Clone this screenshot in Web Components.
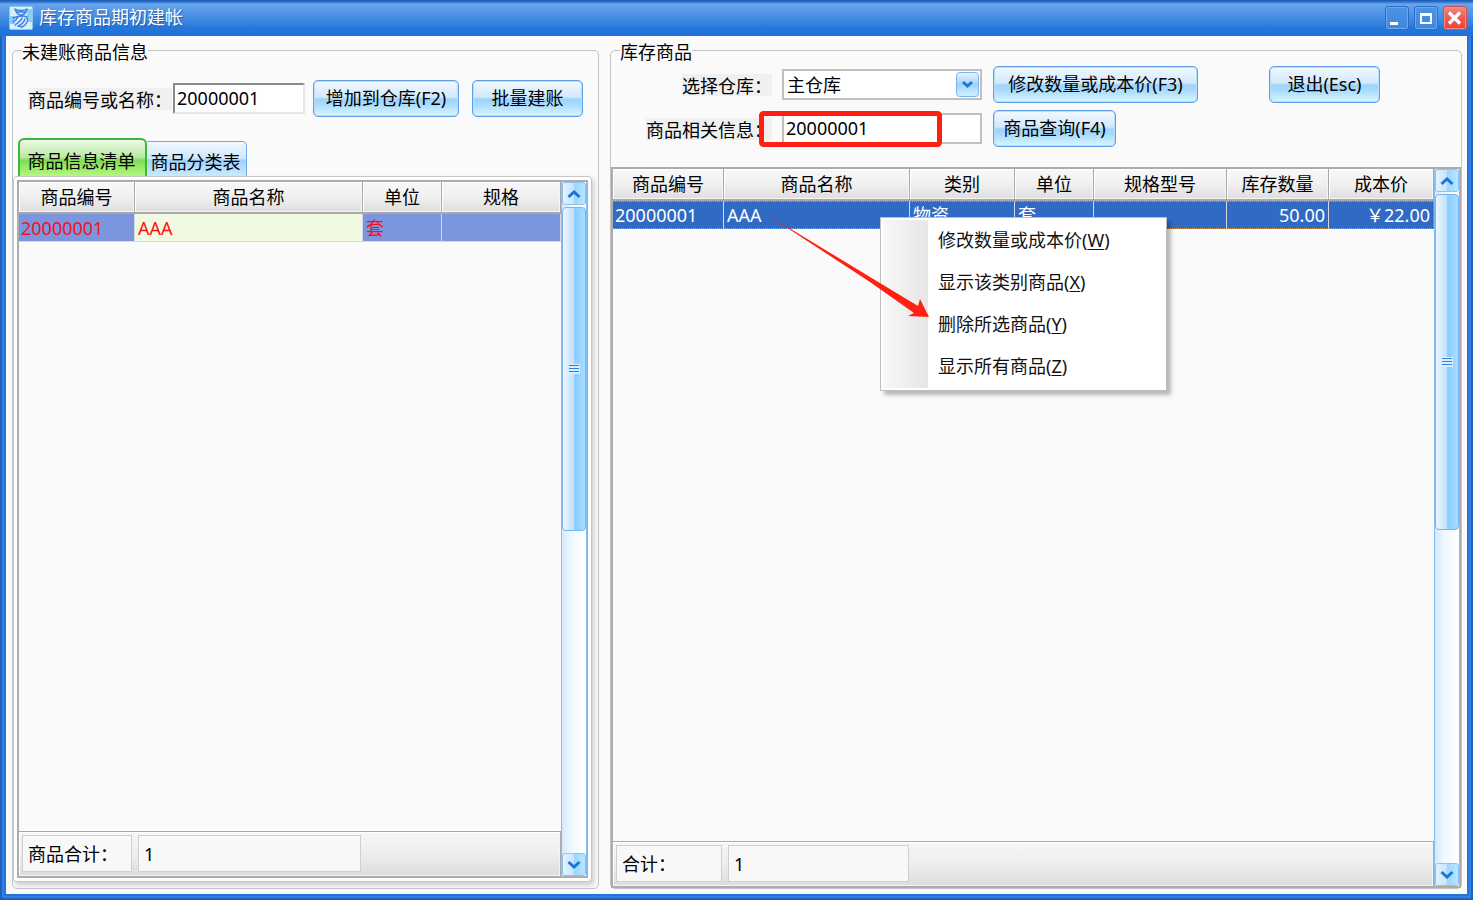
<!DOCTYPE html>
<html lang="zh-CN">
<head>
<meta charset="utf-8">
<title>库存商品期初建帐</title>
<style>
  html, body { height: 100%; margin: 0; }
  body {
    font: 18px/22px "Noto Sans", "Noto Sans CJK SC", sans-serif;
    color: #000;
  }
  .panels { flex: 1; min-height: 0; display: grid; grid-template-columns: 587fr 852fr; gap: 11px; padding: 1px 5px 5px 6px; }
  .bar { display: flex; align-items: center; }
  .left-bar { padding: 17px 0 21px 15px; gap: 8px; }
  .left-bar tool-button + tool-button { margin-left: 5px; }
  .right-bar { display: grid; grid-template-columns: 371px auto 1fr; gap: 7px 11px; align-items: center; justify-items: start; padding: 3px 0 20px; }
  .right-bar text-field, .right-bar select-field { justify-self: end; }
  .right-bar .exit { margin-left: 60px; }
</style>
</head>
<body>
<app-window heading="库存商品期初建帐">
  <div class="panels">
    <group-box legend="未建账商品信息">
      <div class="bar left-bar">
        <text-field label="商品编号或名称：" value="20000001" look="sunken"></text-field>
        <tool-button size="m">增加到仓库(F2)</tool-button>
        <tool-button size="s">批量建账</tool-button>
      </div>
      <tab-panel tabs="商品信息清单,商品分类表">
        <data-grid look="red"
          columns="商品编号:116,商品名称:,单位:79,规格:119"
          row="20000001,AAA,套,"
          total="商品合计：:110,1:223"></data-grid>
      </tab-panel>
    </group-box>
    <group-box legend="库存商品">
      <div class="right-bar">
        <select-field label="选择仓库：" value="主仓库"></select-field>
        <tool-button size="l">修改数量或成本价(F3)</tool-button>
        <tool-button size="s" class="exit">退出(Esc)</tool-button>
        <text-field label="商品相关信息：" value="20000001"></text-field>
        <tool-button size="f">商品查询(F4)</tool-button>
      </div>
      <data-grid look="blue"
        columns="商品编号:111,商品名称:,类别:105,单位:79,规格型号:133,库存数量:102:n,成本价:105:n"
        row="20000001,AAA,物资,套,,50.00,￥22.00"
        total="合计：:106,1:181"></data-grid>
    </group-box>
  </div>
  <context-menu slot="overlay" items="修改数量或成本价:W,显示该类别商品:X,删除所选商品:Y,显示所有商品:Z"></context-menu>
  <red-callout slot="overlay"></red-callout>
</app-window>

<script>
const define = (name, render) => customElements.define(name, class extends HTMLElement {
  connectedCallback() {
    if (this.shadowRoot) return;
    const t = document.createElement('template');
    t.innerHTML = render(this);
    this.attachShadow({ mode: 'open' }).append(t.content.cloneNode(true));
  }
});
const list = (el, name) => el.getAttribute(name).split(',');

define('app-window', el => `
<style>
  :host { display: flex; flex-direction: column; position: relative; box-sizing: border-box; min-height: 100vh;
    padding: 0 6px 6px; background: #2373d9; box-shadow: inset 0 0 0 2px #1d62bc, inset 0 0 0 4px #2f80e2; }
  header { display: flex; align-items: center; height: 36px; margin: 0 -6px; padding: 0 6px 0 9px; box-sizing: border-box; gap: 6px;
    background: linear-gradient(#1c62ba 0 1px, #4b8be0 3px, #68a5ee 4px, #5b9be9 9px, #3a86e0 22px, #2376dc 28px, #2072d9); }
  h1 { flex: 1; margin: 0; font: inherit; line-height: 20px; padding-bottom: 2px; color: #fff; text-shadow: 1px 1px 1px #1f59a8; }
  .sys { display: flex; gap: 5px; }
  button { width: 24px; height: 24px; padding: 0; border: 1px solid #2b6cc4; border-radius: 3px;
    background: linear-gradient(#4b93e6, #3f87de); box-shadow: inset 0 0 0 1px #6aa9ee; }
  .close { border-color: #c8524f; background: linear-gradient(#ee8a84, #ee5a52 50%, #f43f38); box-shadow: inset 0 0 0 1px #f58a84; }
  button svg { display: block; }
  main { flex: 1; display: flex; flex-direction: column; background: #fafafa; }
</style>
<header>
  <svg width="24" height="24" viewBox="0 0 24 24" aria-hidden="true">
    <rect width="24" height="24" rx="2" fill="#8fc6f0"/><rect x="1" y="1" width="22" height="22" fill="#d6edfc"/>
    <path d="M1 10h5v8H1zM18 3h5v13h-5z" fill="#86d2f5"/>
    <g fill="none" stroke="#3f83dc" stroke-width="1.500" stroke-linecap="round" stroke-linejoin="round">
      <path d="M6 3c3 2 9 2 12 0-1 4-3 6-6 6S7 6 6 3zM8 6h8M4 12c5-2 10-3 14-1 2 4-1 8-5 10l-4-1M9 11c-1 2-3 4-5 5M13 12c-1 3-4 5-7 7M16 13c-1 3-4 6-7 7"/>
    </g>
  </svg>
  <h1>${el.getAttribute('heading')}</h1>
  <div class="sys">
    <button aria-label="最小化"><svg width="22" height="22"><path d="M4 15h8v3H4z" fill="#fff"/></svg></button>
    <button aria-label="最大化"><svg width="22" height="22"><path d="M5 6h12v11H5zM7 9v6h8V9z" fill="#fff" fill-rule="evenodd"/></svg></button>
    <button class="close" aria-label="关闭"><svg width="22" height="22"><path d="M5 5.500l11 11M16 5.500l-11 11" stroke="#fff" stroke-width="3.400"/></svg></button>
  </div>
</header>
<main><slot></slot></main>
<slot name="overlay"></slot>`);

define('group-box', el => `
<style>
  :host { display: flex; min-width: 0; }
  fieldset { flex: 1; min-width: 0; display: flex; flex-direction: column; margin: 0; padding: 0; border: 1px solid #c3c3c3; border-radius: 5px; }
  legend { margin-left: 9px; padding: 4px 0 0; line-height: 22px; }
  ::slotted(data-grid), ::slotted(tab-panel) { flex: 1; }
</style>
<fieldset><legend>${el.getAttribute('legend')}</legend><slot></slot></fieldset>`);

define('tool-button', () => `
<style>
  :host { display: block; width: 111px; }
  :host([size=m]) { width: 146px; } :host([size=l]) { width: 205px; } :host([size=f]) { width: 123px; }
  button { display: block; width: 100%; height: 37px; padding: 0; font: inherit; line-height: 35px; white-space: nowrap; color: #000;
    border: 1px solid #619ee8; border-radius: 5px; box-shadow: inset 0 0 0 1px #b9dcfa;
    background: linear-gradient(#f2f9ff, #d3e9fc 45%, #9fd3fb 52%, #a5dafd 65%, #d9f6ff); }
</style>
<button type="button"><slot></slot></button>`);

const fieldStyle = `
  :host { display: flex; align-items: center; gap: 10px; }
  label { background: #f0f0f0; height: 22px; line-height: 24px; white-space: nowrap; }
  input, select { box-sizing: border-box; width: 200px; height: 31px; margin: 0; padding: 0 2px 2px; font: inherit; color: #000; background: #fff;
    border: 2px solid #c0c0c0; border-radius: 0; outline: 0; }`;

define('text-field', el => `
<style>${fieldStyle}
  :host([look=sunken]) { gap: 1px; }
  :host([look=sunken]) input { width: 132px; border-color: #8a8a8a #e6e6e6 #e6e6e6 #8a8a8a; }
</style>
<label for="f">${el.getAttribute('label')}</label><input id="f" value="${el.getAttribute('value')}">`);

define('select-field', el => `
<style>${fieldStyle}
  .box { position: relative; display: flex; }
  select { appearance: none; padding: 2px 3px; }
  svg { position: absolute; right: 3px; top: 3px; pointer-events: none; }
</style>
<label for="f">${el.getAttribute('label')}</label>
<div class="box"><select id="f"><option>${el.getAttribute('value')}</option></select>
<svg width="23" height="25" viewBox="0 0 23 25"><defs><linearGradient id="g" x2="0" y2="1"><stop stop-color="#eaf5ff"/><stop offset=".5" stop-color="#9fd2fb"/><stop offset="1" stop-color="#d2f2ff"/></linearGradient></defs>
<rect x=".5" y=".5" width="22" height="24" rx="3" fill="url(#g)" stroke="#79b3f0"/><path d="M7 10l4.500 4L16 10" fill="none" stroke="#2274d4" stroke-width="3"/></svg></div>`);

define('tab-panel', el => `
<style>
  :host { display: flex; flex-direction: column; min-height: 0; margin: 0 6px 6px 0; }
  nav { display: flex; align-items: flex-end; margin-left: 5px; }
  button { margin: 0; padding: 5px 2px 0 0; height: 35px; width: 100px; font: inherit; color: #000; white-space: nowrap; border: 1px solid #6eaaf0; border-width: 1px 1px 0 0; border-radius: 0 5px 0 0;
    background: linear-gradient(#eff8ff, #d0e7fc 48%, #9fd2fb 54%, #c8ebff); }
  button[aria-selected=true] { height: 38px; width: 129px; border: 2px solid #3fb53c; border-bottom: 0; border-radius: 6px 6px 0 0;
    background: linear-gradient(#edf9e8, #b8e9a0 48%, #7fdb58 56%, #b5f87e); }
  section { flex: 1; display: flex; min-height: 0; padding: 3px; background: #fff; border: 1px solid #c6c6c6; border-radius: 4px; box-shadow: 2px 3px 5px #ccc; }
  ::slotted(*) { flex: 1; }
</style>
<nav role="tablist">${list(el, 'tabs').map((t, i) => `<button role="tab" aria-selected="${!i}">${t}</button>`).join('')}</nav>
<section><slot></slot></section>`);

define('data-grid', el => {
  const cols = list(el, 'columns').map(c => c.split(':'));
  const row = list(el, 'row');
  return `
<style>
  :host { display: flex; box-sizing: border-box; min-width: 0; min-height: 0; border: solid #acacac; border-width: 2px 1px 2px 2px; background: #fafafa; --line: #d8d8e0; }
  .body { flex: 1; min-width: 0; display: flex; flex-direction: column; }
  table { width: 100%; table-layout: fixed; border-collapse: separate; border-spacing: 0; }
  th { height: 32px; padding: 0; box-sizing: border-box; font-weight: normal; border: solid #a9a9a9; border-width: 0 1px 2px 0;
    background: linear-gradient(#f8f8f8, #f0f0f0 50%, #dedede); box-shadow: inset 1px 1px #fff, inset -1px -1px #f6f6f6; }
  td { height: 28px; padding: 0 3px; box-sizing: border-box; border-right: 1px solid var(--line); white-space: nowrap; overflow: hidden; }
  td:first-child { padding-left: 2px; }
  td.n { text-align: right; }
  :host([look=red]) td { color: #f5101c; background: #7b96de; border-bottom: 1px solid var(--line); }
  :host([look=red]) td:nth-child(2) { background: #effae0; color: #ff1010; }
  :host([look=blue]) td { color: #fff; background: #316ac5; border-top: 1px dotted #d69a4a; border-bottom: 1px dotted #d69a4a; }
  :host([look=blue]) td:last-child { border-right: 1px dotted #d69a4a; }
  footer { display: flex; gap: 6px; height: 45px; box-sizing: border-box; margin-top: auto; padding: 3px 3px 4px; border: solid #a9a9a9; border-width: 1px 1px 0 0;
    background: linear-gradient(#f6f6f6, #eee 50%, #dcdcdc); box-shadow: inset 1px 1px #fff, inset -1px -1px #f4f4f4; }
  output { box-sizing: border-box; padding-left: 5px; line-height: 37px; border: 1px solid #cfcfcf; background: #f8f8f8; white-space: nowrap; }
</style>
<div class="body">
  <table>
    <colgroup>${cols.map(c => `<col${c[1] ? ` style="width:${c[1]}px"` : ''}>`).join('')}</colgroup>
    <thead><tr>${cols.map(c => `<th scope="col">${c[0]}</th>`).join('')}</tr></thead>
    <tbody><tr>${row.map((v, i) => `<td${cols[i][2] ? ' class="n"' : ''}>${v}</td>`).join('')}</tr></tbody>
  </table>
  <footer>${list(el, 'total').map(c => c.match(/^(.*):(\d+)$/)).map(m => `<output style="width:${m[2]}px">${m[1]}</output>`).join('')}</footer>
</div>
<scroll-bar></scroll-bar>`;
});

define('scroll-bar', () => `
<style>
  :host { display: flex; flex-direction: column; width: 26px; box-sizing: border-box; border: solid #86bdf2; border-width: 0 1px;
    background: linear-gradient(90deg, #d3e8fd, #eef7ff 35%, #fff); }
  button { height: 23px; padding: 0; border: 1px solid #8cc3f6; border-radius: 3px; background: linear-gradient(90deg, #e4f2ff, #c5e4fd 50%, #9ad7ff 52%, #b9e6ff); }
  button svg { display: block; margin: auto; }
  .track { flex: 1; display: flex; flex-direction: column; }
  .thumb { flex: 0 0 50%; display: grid; place-items: center; box-sizing: border-box; margin-top: 2px; border: 1px solid #78b2f2; border-radius: 4px;
    background: linear-gradient(90deg, #eff6ff, #bfdffc 50%, #86ccff 53%, #a9deff); }
</style>
<button aria-label="向上"><svg width="14" height="10"><path d="M1.500 8L7 3l5.500 5" fill="none" stroke="#2274d4" stroke-width="3"/></svg></button>
<div class="track"><div class="thumb"><svg width="12" height="10"><rect width="12" height="10" fill="#d8efff"/><path d="M1 1.500h10M1 4.500h10M1 7.500h10" stroke="#2f80dc"/></svg></div></div>
<button aria-label="向下"><svg width="14" height="10"><path d="M1.500 2L7 7l5.500-5" fill="none" stroke="#2274d4" stroke-width="3"/></svg></button>`);

define('context-menu', el => `
<style>
  :host { position: absolute; left: 880px; top: 217px; width: 287px; box-sizing: border-box; padding: 2px; border: 1px solid #bdbdbd; background: #fff; box-shadow: 4px 4px 4px #0004; }
  menu { margin: 0; padding: 0; list-style: none; background: linear-gradient(90deg, #f8f8f8, #e6e6e6 45px, #fff 45px); }
  button { display: block; width: 100%; height: 42px; padding: 0 0 2px 55px; border: 0; background: none; font: inherit; color: #111; text-align: left; }
  u { text-underline-offset: 2px; }
</style>
<menu role="menu">${list(el, 'items').map(i => i.split(':')).map(([t, k]) => `<li role="none"><button role="menuitem">${t}(<u>${k}</u>)</button></li>`).join('')}</menu>`);

define('red-callout', () => `
<style>
  :host { position: absolute; left: 758px; top: 110px; pointer-events: none; }
  svg { display: block; }
</style>
<svg width="186" height="216" viewBox="758 110 186 216" aria-hidden="true">
  <rect x="761.500" y="113.500" width="178" height="31" rx="2" fill="none" stroke="#ff2012" stroke-width="5"/>
  <path d="M766 214L870 277l48 29 2-7 9 18-21-1 6-3-44-31z" fill="#ff2012"/>
</svg>`);
</script>
</body>
</html>
